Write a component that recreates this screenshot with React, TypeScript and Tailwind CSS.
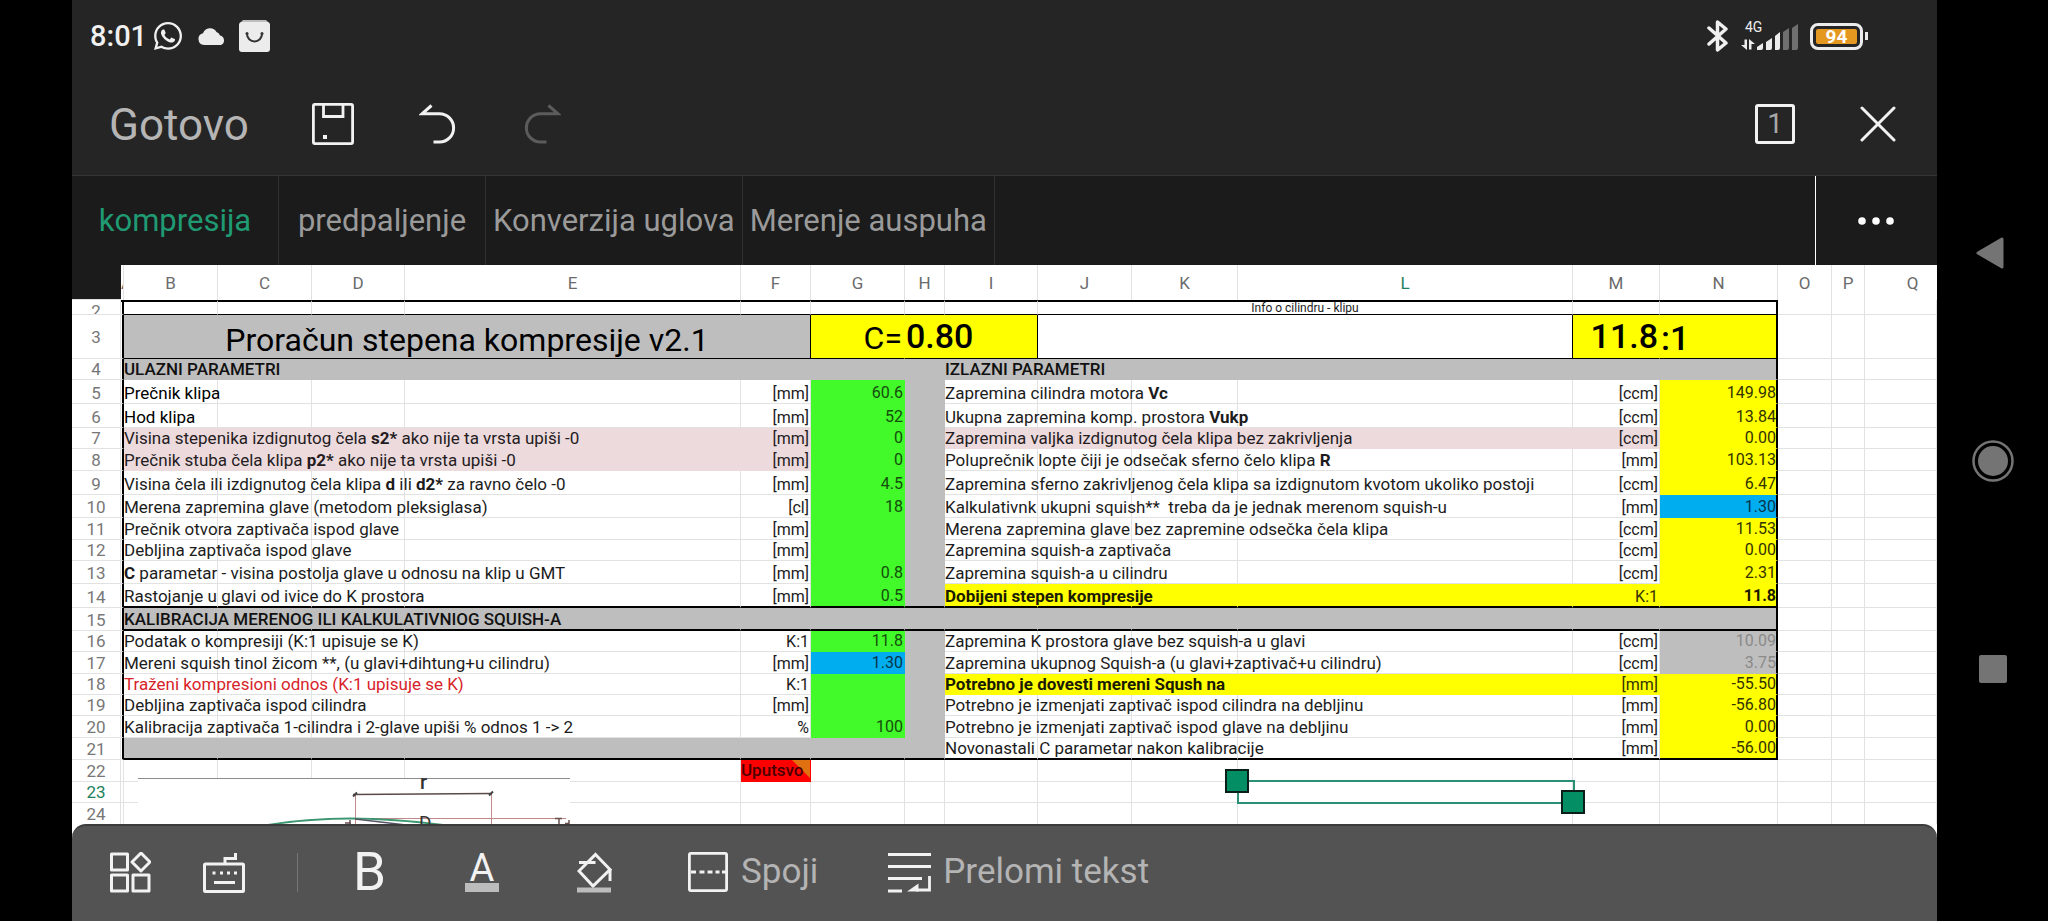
import React from "react";
import { FaWhatsapp } from "react-icons/fa";

type Fill = "none" | "gray" | "green" | "blue" | "yellow" | "pink" | "mute";

const fills: Record<Fill, string> = {
  none: "border-[#e2e2e2] text-[#1c1c1c]",
  gray: "border-[#bebebe] bg-[#bebebe] text-[#111111]",
  mute: "border-[#bebebe] bg-[#bebebe] text-[#8a8a8a]",
  green: "border-[#42f92a] bg-[#42f92a] text-[#144d0c]",
  blue: "border-[#00adef] bg-[#00adef] text-[#06364a]",
  yellow: "border-[#ffff00] bg-[#ffff00] text-[#333300]",
  pink: "border-[#eddadd] bg-[#eddadd] text-[#241c1e]",
};

interface CellProps {
  fill?: Fill;
  end?: string;
  right?: string;
  align?: string;
  span?: number;
  extra?: string;
  children?: React.ReactNode;
}

function Cell({ fill = "none", end = "border-b", right = "border-r", align = "text-left", span, extra = "", children }: CellProps) {
  return (
    <td colSpan={span} className={`p-0 align-bottom ${fills[fill]} ${end} ${right} ${align} ${extra}`}>
      {children}
    </td>
  );
}

interface Row {
  n: number;
  h: string;
  label?: React.ReactNode;
  labelFill?: Fill;
  unit?: string;
  value?: string;
  valueFill?: Fill;
  out?: React.ReactNode;
  outFill?: Fill;
  outUnit?: string;
  outValue?: React.ReactNode;
  outValueFill?: Fill;
  band?: boolean;
  rule?: boolean;
}

const rows: Row[] = [
  { n: 4, h: "h-[21px]", band: true, label: <span className="font-medium">ULAZNI PARAMETRI</span>, out: <span className="font-medium">IZLAZNI PARAMETRI</span> },
  { n: 5, h: "h-[24px]", label: <span className="text-black">Prečnik klipa</span>, unit: "[mm]", value: "60.6", out: <>Zapremina cilindra motora <b>Vc</b></>, outUnit: "[ccm]", outValue: "149.98" },
  { n: 6, h: "h-[24px]", label: <span className="text-black">Hod klipa</span>, unit: "[mm]", value: "52", out: <>Ukupna zapremina komp. prostora <b>Vukp</b></>, outUnit: "[ccm]", outValue: "13.84" },
  { n: 7, h: "h-[21px]", labelFill: "pink", label: <>Visina stepenika izdignutog čela <b>s2*</b> ako nije ta vrsta upiši -0</>, unit: "[mm]", value: "0", outFill: "pink", out: "Zapremina valjka izdignutog čela klipa bez zakrivljenja", outUnit: "[ccm]", outValue: "0.00" },
  { n: 8, h: "h-[22px]", labelFill: "pink", label: <>Prečnik stuba čela klipa <b>p2*</b> ako nije ta vrsta upiši -0</>, unit: "[mm]", value: "0", out: <>Poluprečnik lopte čiji je odsečak sferno čelo klipa <b>R</b></>, outUnit: "[mm]", outValue: "103.13" },
  { n: 9, h: "h-[24px]", label: <>Visina čela ili izdignutog čela klipa <b>d</b> ili <b>d2*</b> za ravno čelo -0</>, unit: "[mm]", value: "4.5", out: "Zapremina sferno zakrivljenog čela klipa sa izdignutom kvotom ukoliko postoji", outUnit: "[ccm]", outValue: "6.47" },
  { n: 10, h: "h-[23px]", label: "Merena zapremina glave (metodom pleksiglasa)", unit: "[cl]", value: "18", out: "Kalkulativnk ukupni squish**\u00a0 treba da je jednak merenom squish-u", outUnit: "[mm]", outValue: "1.30", outValueFill: "blue" },
  { n: 11, h: "h-[22px]", label: "Prečnik otvora zaptivača ispod glave", unit: "[mm]", out: "Merena zapremina glave bez zapremine odsečka čela klipa", outUnit: "[ccm]", outValue: "11.53" },
  { n: 12, h: "h-[21px]", label: "Debljina zaptivača ispod glave", unit: "[mm]", out: "Zapremina squish-a zaptivača", outUnit: "[ccm]", outValue: "0.00" },
  { n: 13, h: "h-[23px]", label: <><b>C</b> parametar - visina postolja glave u odnosu na klip u GMT</>, unit: "[mm]", value: "0.8", out: "Zapremina squish-a u cilindru", outUnit: "[ccm]", outValue: "2.31" },
  { n: 14, h: "h-[24px]", rule: true, label: "Rastojanje u glavi od ivice do K prostora", unit: "[mm]", value: "0.5", outFill: "yellow", out: <b className="text-[#1a1a00]">Dobijeni stepen kompresije</b>, outUnit: "K:1", outValue: <b className="text-[#1a1a00]">11.8</b> },
  { n: 15, h: "h-[23px]", band: true, rule: true, label: <span className="font-medium">KALIBRACIJA MERENOG ILI KALKULATIVNIOG SQUISH-A</span> },
  { n: 16, h: "h-[21px]", label: "Podatak o kompresiji (K:1 upisuje se K)", unit: "K:1", value: "11.8", out: "Zapremina K prostora glave bez squish-a u glavi", outUnit: "[ccm]", outValue: "10.09", outValueFill: "mute" },
  { n: 17, h: "h-[22px]", label: "Mereni squish tinol žicom **, (u glavi+dihtung+u cilindru)", unit: "[mm]", value: "1.30", valueFill: "blue", out: "Zapremina ukupnog Squish-a (u glavi+zaptivač+u cilindru)", outUnit: "[ccm]", outValue: "3.75", outValueFill: "mute" },
  { n: 18, h: "h-[21px]", label: <span className="text-[#d8232a]">Traženi kompresioni odnos (K:1 upisuje se K)</span>, unit: "K:1", outFill: "yellow", out: <b className="text-[#1a1a00]">Potrebno je dovesti mereni Sqush na</b>, outUnit: "[mm]", outValue: "-55.50" },
  { n: 19, h: "h-[21px]", label: "Debljina zaptivača ispod cilindra", unit: "[mm]", out: "Potrebno je izmenjati zaptivač ispod cilindra na debljinu", outUnit: "[mm]", outValue: "-56.80" },
  { n: 20, h: "h-[22px]", label: "Kalibracija zaptivača 1-cilindra i 2-glave upiši % odnos 1 -> 2", unit: "%", value: "100", out: "Potrebno je izmenjati zaptivač ispod glave na debljinu", outUnit: "[mm]", outValue: "0.00" },
  { n: 21, h: "h-[22px]", rule: true, labelFill: "gray", valueFill: "gray", out: "Novonastali C parametar nakon kalibracije", outUnit: "[mm]", outValue: "-56.00" },
];

function RowNumber({ n, active = false }: { n: number; active?: boolean }) {
  return (
    <th scope="row" className={`border-r border-b border-[#e2e2e2] p-0 pb-px align-bottom text-[17px] font-normal ${active ? "text-[#1d8060]" : "text-[#777777]"}`}>
      {n}
    </th>
  );
}

function Blank({ count }: { count: number }) {
  return (
    <>
      {Array.from({ length: count }, (_, i) => (
        <Cell key={i} />
      ))}
    </>
  );
}

const frameLeft = "border-r-2 border-r-black";

function DataRow({ r }: { r: Row }) {
  const end = r.rule ? "border-b-2 border-b-black" : "border-b";
  const lf: Fill = r.band ? "gray" : r.labelFill ?? "none";
  const of: Fill = r.band ? "gray" : r.outFill ?? "none";
  return (
    <tr className={r.h}>
      <RowNumber n={r.n} />
      <Cell right={frameLeft} />
      <Cell fill={lf} end={end} extra="pb-px text-[17px]">{r.label}</Cell>
      <Cell fill={lf} end={end} />
      <Cell fill={lf} end={end} />
      <Cell fill={lf} end={end} />
      <Cell fill={lf} end={end} align="text-right" extra="pr-px">{r.unit}</Cell>
      <Cell fill={r.band ? "gray" : r.valueFill ?? "green"} end={end} align="text-right" extra="pr-px pb-px">{r.value}</Cell>
      <Cell fill="gray" end={end} />
      <Cell fill={of} end={end} extra="pb-px text-[17px]">{r.out}</Cell>
      <Cell fill={of} end={end} />
      <Cell fill={of} end={end} />
      <Cell fill={of} end={end} />
      <Cell fill={of} end={end} align="text-right" extra="pr-px">{r.outUnit}</Cell>
      <Cell fill={r.band ? "gray" : r.outValueFill ?? "yellow"} end={end} right={frameLeft} align="text-right" extra="pb-px">{r.outValue}</Cell>
      <Blank count={3} />
    </tr>
  );
}

const columns: [string, string][] = [
  ["A", "w-[3px]"], ["B", "w-[94px]"], ["C", "w-[94px]"], ["D", "w-[93px]"], ["E", "w-[336px]"], ["F", "w-[70px]"],
  ["G", "w-[94px]"], ["H", "w-[40px]"], ["I", "w-[93px]"], ["J", "w-[94px]"], ["K", "w-[106px]"], ["L", "w-[335px]"],
  ["M", "w-[87px]"], ["N", "w-[118px]"], ["O", "w-[54px]"], ["P", "w-[33px]"], ["Q", ""],
];

function Sheet() {
  const top = "border-t-2 border-t-black";
  const line = "border-b border-b-black";
  return (
    <table className="w-full table-fixed border-separate border-spacing-0 text-[16px] leading-[18px] whitespace-nowrap">
      <colgroup>
        <col className="w-[49px]" />
        {columns.map(([name, w]) => (
          <col key={name} className={w} />
        ))}
      </colgroup>
      <thead>
        <tr className="h-[35px] text-[17px]">
          <td className="border-b border-[#e2e2e2] bg-[#1b1b1b] p-0" />
          {columns.map(([name]) => (
            <th key={name} scope="col" className={`overflow-hidden border-[#e2e2e2] p-0 align-middle font-normal ${name === "L" ? "text-[#1d8060]" : "text-[#6b6b6b]"} ${name === "Q" ? "pl-[23px]" : "border-r"}`}>
              {name}
            </th>
          ))}
        </tr>
      </thead>
      <tbody>
        <tr className="h-[15px]">
          <th scope="row" className="border-r border-b border-[#e2e2e2] p-0 align-bottom text-[17px] font-normal text-[#777777]">
            <div className="h-[11px] overflow-hidden leading-[16px]">2</div>
          </th>
          <Cell right={frameLeft} extra={top} />
          {["B", "C", "D", "E", "F", "G", "H", "I"].map((c) => (
            <Cell key={c} end={line} extra={top} />
          ))}
          <Cell span={3} end={line} align="text-center" extra={`${top} text-[12px] leading-[12px]`}>Info o cilindru - klipu</Cell>
          <Cell end={line} extra={top} />
          <Cell end={line} right={frameLeft} extra={top} />
          <Blank count={3} />
        </tr>
        <tr className="h-[44px] text-[32px] leading-[36px]">
          <th scope="row" className="border-r border-b border-[#e2e2e2] p-0 align-middle text-[17px] leading-[18px] font-normal text-[#777777]">3</th>
          <Cell right={frameLeft} />
          <Cell span={5} fill="gray" end={line} right="border-r border-r-black" align="text-center" extra="text-black">Proračun stepena kompresije v2.1</Cell>
          <Cell fill="yellow" end={line} align="text-right" extra="pr-[2px] pb-[2px] text-black">C=</Cell>
          <Cell span={2} fill="yellow" end={line} right="border-r border-r-black" extra="pb-[4px] pl-px text-[34px] font-medium text-black">0.80</Cell>
          <Cell span={3} end={line} right="border-r border-r-black" />
          <Cell fill="yellow" end={line} align="text-right" extra="pr-px pb-[4px] text-[34px] font-medium text-black">11.8</Cell>
          <Cell fill="yellow" end={line} right={frameLeft} extra="pb-[2px] pl-px text-[34px] font-medium text-black">:1</Cell>
          <Blank count={3} />
        </tr>
        {rows.map((r) => (
          <DataRow key={r.n} r={r} />
        ))}
        <tr className="h-[22px]">
          <RowNumber n={22} />
          <Blank count={5} />
          <td className="relative border-r border-b border-[#ff0000] bg-[#ff0000] p-0 pb-px align-bottom">
            <svg className="absolute top-0 right-0" width="18" height="18" viewBox="0 0 18 18" aria-hidden="true">
              <path d="M0 0H18V18Z" fill="#e07010" />
            </svg>
            <span className="relative text-[17px] font-medium text-[#4a0000]">Uputsvo</span>
          </td>
          <Blank count={11} />
        </tr>
        <tr className="h-[21px]">
          <RowNumber n={23} active />
          <Blank count={17} />
        </tr>
        <tr className="h-[22px]">
          <RowNumber n={24} />
          <Blank count={17} />
        </tr>
      </tbody>
    </table>
  );
}

function PistonDrawing() {
  return (
    <svg className="absolute top-[513px] left-[66px] overflow-visible bg-white" width="432" height="46" viewBox="0 0 432 46" fontFamily="Roboto, sans-serif" aria-hidden="true">
      <path d="M0 .5H432" stroke="#8c8c8c" />
      <text x="282" y="11" fontSize="20" fontWeight="500" fill="#333333">r</text>
      <path d="M217.500 16V46M353.500 16V46M217.500 40.500H428" stroke="#c08a8a" fill="none" />
      <path d="M215 16.500L354 15.500" stroke="#5a4a4a" strokeWidth="1.500" />
      <path d="M215 18.500L219 14.500M351 17.500L355 13.500" stroke="#444444" strokeWidth="2" />
      <path d="M130 47Q207 34 305 47" stroke="#3c9670" strokeWidth="2" fill="none" />
      <path d="M217 41L268 47" stroke="#555566" strokeWidth="1.500" />
      <text x="281" y="51" fontSize="19" fill="#333333">D</text>
      <path d="M207 45H213M212 42V46M417 40.500H424M421 41V46M431 42V46M427 45.500H431" stroke="#6a5050" strokeWidth="1.500" fill="none" />
    </svg>
  );
}

function Selection() {
  return (
    <div className="absolute top-[515px] left-[1165px] h-[24px] w-[338px] border-2 border-[#2a9075]">
      <span className="absolute -top-[13px] -left-[14px] size-6 border-2 border-[#0b1f18] bg-[#038e63]" />
      <span className="absolute -right-[12px] -bottom-[12px] size-6 border-2 border-[#0b1f18] bg-[#038e63]" />
    </div>
  );
}

function StatusBar() {
  return (
    <div className="flex h-[72px] items-center justify-between pr-[69px] pl-[18px] text-[#f0f0f0]">
      <div className="flex items-center">
        <span className="w-[62px] text-[29px] leading-[32px] font-medium">8:01</span>
        <FaWhatsapp className="mr-[14px] size-[32px]" />
        <svg width="28" height="17" viewBox="0 0 28 17" className="mr-[13px]" aria-hidden="true">
          <path d="M6 17a6 6 0 0 1-1-11.800A7.500 7.500 0 0 1 18.500 4 6 6 0 0 1 22 7.500 5 5 0 0 1 23 17Z" fill="#ececec" />
        </svg>
        <svg width="31" height="32" viewBox="0 0 31 32" aria-hidden="true">
          <path d="M4 0H27L30 3H1Z" fill="#bdbdbd" />
          <rect y="2" width="31" height="30" rx="3" fill="#ececec" />
          <path d="M8 14a7.500 7.500 0 0 0 15 0" stroke="#333333" strokeWidth="2" strokeLinecap="round" fill="none" />
          <circle cx="8" cy="13.500" r="1.500" fill="#333333" />
          <circle cx="23" cy="13.500" r="1.500" fill="#333333" />
        </svg>
      </div>
      <div className="flex items-center">
        <svg width="22" height="34" viewBox="0 0 22 34" className="mr-[12px]" fill="none" stroke="#f0f0f0" strokeWidth="3.500" strokeLinejoin="round" strokeLinecap="round" aria-hidden="true">
          <path d="M2 9L19 24 10.500 31V3L19 10 2 25" />
        </svg>
        <svg width="58" height="30" viewBox="0 0 58 30" className="mr-[11px] overflow-visible" fill="#ececec" aria-hidden="true">
          <text x="4" y="11" fontSize="14" fontFamily="Roboto, sans-serif">4G</text>
          <path d="M3.500 18.500H6V29L0 24H3.500ZM8 18L14 23H10.500V28.500H8Z" />
          <path d="M16 29V26L22 22V27a2 2 0 0 1-2 2Z" />
          <path d="M25 29V21L31 17V27a2 2 0 0 1-2 2Z" />
          <path d="M34 29V15L39 11V27a2 2 0 0 1-2 2Z" />
          <path d="M42 29V11L48 7V27a2 2 0 0 1-2 2ZM51 29V7L57 3V27a2 2 0 0 1-2 2Z" fill="#6f6f6f" />
        </svg>
        <div className="flex items-center gap-[2px]">
          <div className="flex h-[27px] w-[53px] items-center justify-center rounded-[8px] border-[3px] border-[#ececec]">
            <span className="flex h-[15px] w-[41px] items-center justify-center rounded-[2px] bg-[#e5981f] text-[19px] leading-[15px] font-bold text-white">94</span>
          </div>
          <span className="h-2 w-[3px] bg-[#ececec]" />
        </div>
      </div>
    </div>
  );
}

function TitleBar() {
  return (
    <div className="flex h-[103px] items-center justify-between pr-[41px] pl-[37px]">
      <div className="flex items-center">
        <button className="w-[203px] pt-[2px] text-left text-[44px] leading-[48px] text-[#b5b5b5]">Gotovo</button>
        <button aria-label="Sačuvaj" className="mr-[65px]">
          <svg width="42" height="42" viewBox="0 0 42 42" fill="none" stroke="#f2f2f2" strokeWidth="2.800" aria-hidden="true">
            <rect x="1.400" y="1.400" width="39.200" height="39.200" rx="1.500" />
            <path d="M11.500 2V13.500H31V2" />
            <rect x="11" y="32" width="4" height="4" fill="#f2f2f2" stroke="none" />
          </svg>
        </button>
        <button aria-label="Poništi" className="mr-[68px]">
          <svg width="37" height="40" viewBox="0 0 37 40" fill="none" stroke="#f2f2f2" strokeWidth="3" aria-hidden="true">
            <path d="M12.500 1.500L3 9.800H20.500A14 14 0 0 1 20.500 38H14.500" />
          </svg>
        </button>
        <button aria-label="Ponovi" disabled>
          <svg width="37" height="40" viewBox="0 0 37 40" fill="none" stroke="#5c5c5c" strokeWidth="3" aria-hidden="true">
            <path d="M24.500 1.500L34 9.800H16.500A14 14 0 0 0 16.500 38H22.500" />
          </svg>
        </button>
      </div>
      <div className="flex items-center gap-[65px]">
        <button className="flex size-[40px] items-center justify-center rounded-[3px] border-[3px] border-[#f2f2f2] text-[28px] leading-[32px] text-[#a8a8a8]">1</button>
        <button aria-label="Zatvori">
          <svg width="36" height="36" viewBox="0 0 36 36" stroke="#f2f2f2" strokeWidth="3" strokeLinecap="round" aria-hidden="true">
            <path d="M2 2L34 34M34 2L2 34" />
          </svg>
        </button>
      </div>
    </div>
  );
}

function Tabs() {
  const tab = "min-w-[207px] border-r border-[#303030] px-[7px] text-center";
  return (
    <div className="flex h-[90px] shrink-0 border-t border-[#343434] bg-[#1b1b1b] text-[31px] leading-[36px] text-[#9a9a9a]">
      <button className={`${tab} text-[#1f9a73]`}>kompresija</button>
      <button className={tab}>predpaljenje</button>
      <button className={tab}>Konverzija uglova</button>
      <button className={tab}>Merenje auspuha</button>
      <button aria-label="Još listova" className="ml-auto flex w-[122px] items-center justify-center border-l border-white pr-[2px]">
        <svg width="36" height="8" viewBox="0 0 36 8" fill="#ffffff" aria-hidden="true">
          <circle cx="4" cy="4" r="3.800" />
          <circle cx="18" cy="4" r="3.800" />
          <circle cx="32" cy="4" r="3.800" />
        </svg>
      </button>
    </div>
  );
}

function Toolbar() {
  return (
    <div className="shrink-0 bg-white">
      <div className="flex h-[97px] items-center rounded-t-[14px] border-t-2 border-[#3c3c3c] bg-[#535353] pb-[3px] pl-[38px] text-[35px] leading-[40px] text-[#b4b4b4]">
        <button aria-label="Alati" className="mr-[52px]">
          <svg width="41" height="41" viewBox="0 0 41 41" fill="none" stroke="#f2f2f2" strokeWidth="3" strokeLinejoin="round" aria-hidden="true">
            <rect x="1.500" y="2" width="16" height="16" />
            <rect x="1.500" y="23" width="16" height="16" />
            <rect x="23" y="23" width="16" height="16" />
            <path d="M31 1L40 10 31 19 22 10Z" />
          </svg>
        </button>
        <button aria-label="Tastatura" className="mr-[52px]">
          <svg width="42" height="41" viewBox="0 0 42 41" fill="none" stroke="#f2f2f2" strokeWidth="3" aria-hidden="true">
            <rect x="1.500" y="12" width="39" height="27.500" rx="1" />
            <path d="M22 11V6.500H32.500V1" />
            <path d="M9.500 21h3M17 21h3M24 21h3M31 21h3" />
            <path d="M11 30.500H32" />
          </svg>
        </button>
        <span className="mr-[55px] h-[39px] w-px bg-[#767676]" />
        <button aria-label="Podebljano" className="w-[112px] text-left text-[53px] leading-[56px] text-[#f2f2f2]">B</button>
        <button aria-label="Boja teksta" className="mr-[78px] flex w-[34px] flex-col items-center">
          <span className="h-[31px] text-[38px] leading-[32px] text-[#f2f2f2]">A</span>
          <span className="h-[9px] w-full bg-[#bcbcbc]" />
        </button>
        <button aria-label="Boja ispune" className="mr-[76px]">
          <svg width="35" height="41" viewBox="0 0 35 41" fill="none" stroke="#f2f2f2" strokeWidth="3" aria-hidden="true">
            <path d="M18.500 2.500L33 17.500 16 34 2 19Z" />
            <path d="M2 10.500H18.500M33 17V29" />
            <path d="M0 38H34" stroke="#bcbcbc" strokeWidth="5" />
          </svg>
        </button>
        <button className="mr-[70px] flex items-center gap-[13px]">
          <svg width="40" height="40" viewBox="0 0 40 40" fill="none" stroke="#f2f2f2" strokeWidth="2.800" aria-hidden="true">
            <rect x="1.400" y="1.400" width="37.200" height="37.200" rx="1.500" />
            <path d="M3 20H8M11.500 20h5M19.500 20h5M27.500 20h4M34 20h4" />
          </svg>
          Spoji
        </button>
        <button className="flex items-center gap-[12px]">
          <svg width="43" height="41" viewBox="0 0 43 41" fill="none" stroke="#f2f2f2" strokeWidth="2.800" aria-hidden="true">
            <path d="M0 2.500H43M0 14.500H43M0 26.500H34M0 39H14M41.500 24V38H28" />
            <path d="M19 39.500L30.500 31.500V39.500Z" fill="#f2f2f2" stroke="none" />
          </svg>
          Prelomi tekst
        </button>
      </div>
    </div>
  );
}

function SystemNav() {
  return (
    <nav className="flex w-[111px] shrink-0 flex-col items-center justify-center gap-[160px]">
      <button aria-label="Nazad" className="flex size-12 items-center justify-center">
        <svg width="33" height="32" viewBox="0 0 33 32" aria-hidden="true">
          <path d="M26 2V30L2 16Z" fill="#747474" stroke="#747474" strokeWidth="3" strokeLinejoin="round" />
        </svg>
      </button>
      <button aria-label="Početni ekran" className="flex size-12 items-center justify-center">
        <svg width="42" height="42" viewBox="0 0 42 42" aria-hidden="true">
          <circle cx="21" cy="21" r="19.500" fill="none" stroke="#747474" strokeWidth="2.500" />
          <circle cx="21" cy="21" r="15" fill="#747474" />
        </svg>
      </button>
      <button aria-label="Nedavne aplikacije" className="flex size-12 items-center justify-center">
        <span className="size-7 rounded-[2px] bg-[#747474]" />
      </button>
    </nav>
  );
}

export default function App() {
  return (
    <div className="flex h-screen bg-black pl-[72px] font-[Roboto,sans-serif]">
      <main className="flex min-w-0 flex-1 flex-col bg-[#252525]">
        <header className="shrink-0">
          <StatusBar />
          <TitleBar />
        </header>
        <Tabs />
        <section className="relative min-h-0 flex-1 overflow-hidden bg-white">
          <Sheet />
          <PistonDrawing />
          <Selection />
        </section>
        <Toolbar />
      </main>
      <SystemNav />
    </div>
  );
}
